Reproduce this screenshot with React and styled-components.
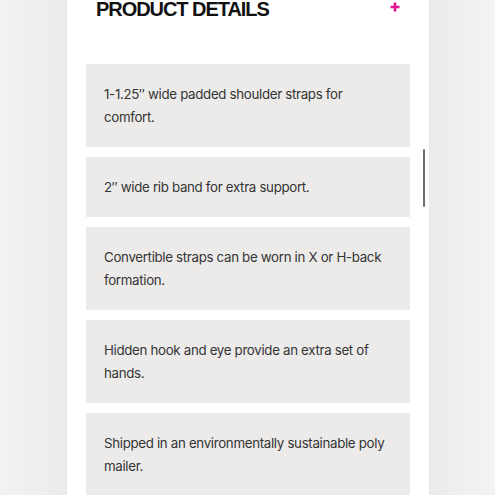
import React from "react";
import styled, { createGlobalStyle } from "styled-components";

const Global = createGlobalStyle`
  html, body { margin: 0; padding: 0; }
  body {
    width: 495px;
    height: 495px;
    overflow: hidden;
    background: linear-gradient(90deg, #f2f2f2 0px, #eeeeee 45px, #ebebeb 67px, #ebebeb 430px, #eeeeee 450px, #f3f3f3 495px);
  }
`;

const Page = styled.div`
  display: flex;
  justify-content: flex-start;
  padding-left: 67px;
  height: 495px;
`;

const Panel = styled.section`
  position: relative;
  width: 362px;
  height: 495px;
  background: #ffffff;
  box-sizing: border-box;
  padding: 0 19px;
  overflow: hidden;
`;

const Header = styled.div`
  display: flex;
  align-items: flex-start;
  justify-content: space-between;
  padding: 0 10px 0 10px;
  height: 63.5px;
`;

const Title = styled.h2`
  margin: 0;
  font-family: "Liberation Sans", Arial, sans-serif;
  font-weight: 700;
  font-size: 20px;
  line-height: 18px;
  letter-spacing: -1.05px;
  color: #111111;
`;

const PlusIcon = styled.svg`
  width: 10px;
  height: 10px;
  margin-top: 2px;
  margin-right: 0px;
`;

const List = styled.div`
  display: flex;
  flex-direction: column;
  gap: 10px;
`;

const Card = styled.div`
  background: #ecebea;
  padding: 19px 18px 18px;
  font-family: Inter, "Noto Sans", sans-serif;
  font-size: 13.3px;
  line-height: 23px;
  color: #343434;
  letter-spacing: -0.32px;
`;

const Scrollbar = styled.div`
  position: absolute;
  right: 4px;
  top: 149px;
  width: 2.5px;
  height: 58px;
  border-radius: 2px;
  background: #6f6f6f;
`;

const items = [
  "1-1.25\u2033 wide padded shoulder straps for comfort.",
  "2\u2033 wide rib band for extra support.",
  "Convertible straps can be worn in X or H-back formation.",
  "Hidden hook and eye provide an extra set of hands.",
  "Shipped in an environmentally sustainable poly mailer.",
];

export default function App() {
  return (
    <>
      <Global />
      <Page>
        <Panel>
          <Header>
            <Title>PRODUCT DETAILS</Title>
            <PlusIcon viewBox="0 0 10 10">
              <path d="M5 0.5V9.5M0.5 5H9.5" stroke="#e0168f" strokeWidth="2.6" />
            </PlusIcon>
          </Header>
          <List>
            {items.map((t) => (
              <Card key={t}>{t}</Card>
            ))}
          </List>
          <Scrollbar />
        </Panel>
      </Page>
    </>
  );
}
